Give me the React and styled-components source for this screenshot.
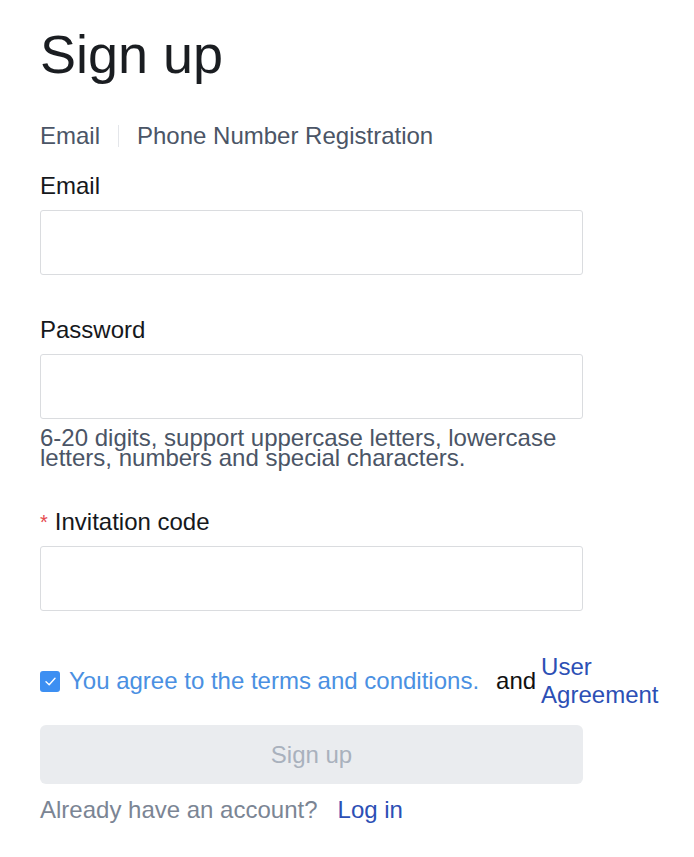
import React from 'react'
import styled, { createGlobalStyle } from 'styled-components';

const GlobalStyle = createGlobalStyle`
    body {
        margin: 0;
        background: #ffffff;
        font-family: "Liberation Sans", Arial, sans-serif;
    }
`;

const Page = styled.div`
    width: 620px;
    padding: 23px 34px 40px 40px;
`;
const Title = styled.h1`
    margin: 0;
    font-size: 54px;
    font-weight: 400;
    line-height: 62px;
    color: #1a1d21;
`;
const Tabs = styled.div`
    display: flex;
    align-items: center;
    margin-top: 35px;
    height: 32px;
`;
const Tab = styled.span`
    font-size: 24px;
    line-height: 32px;
    color: #4b5566;
    padding: 0 18px;
    &:first-child {
        padding-left: 0;
    }
`;
const Divider = styled.span`
    width: 1px;
    height: 22px;
    background: #e4e6ea;
`;
const Field = styled.div`
    margin-top: ${props => props.gap}px;
`;
const Label = styled.label`
    display: block;
    font-size: 24px;
    line-height: 32px;
    color: #16181c;
`;
const Star = styled.span`
    color: #e5484d;
    font-size: 20px;
    margin-right: 7px;
    vertical-align: top;
`;
const Input = styled.input`
    display: block;
    box-sizing: border-box;
    width: 543px;
    height: 65px;
    margin-top: 8px;
    border: 1px solid #dadcdf;
    border-radius: 3px;
    padding: 0 14px;
    font-size: 22px;
    font-family: inherit;
    outline: none;
`;
const Hint = styled.p`
    margin: 9px 0 0;
    width: 543px;
    font-size: 24px;
    line-height: 20px;
    color: #4b5566;
`;
const AgreeRow = styled.div`
    display: flex;
    align-items: center;
    margin-top: 42px;
    font-size: 24px;
`;
const CheckLabel = styled.label`
    display: flex;
    align-items: center;
    flex-shrink: 0;
    color: #4a90e2;
    line-height: 28px;
`;
const Box = styled.span`
    display: inline-flex;
    align-items: center;
    justify-content: center;
    width: 20px;
    height: 21px;
    border-radius: 3px;
    background: #3d8ff2;
    margin-right: 9px;
`;
const And = styled.span`
    flex-shrink: 0;
    margin: 0 5px 0 17px;
    color: #111111;
    line-height: 28px;
`;
const Link = styled.a`
    color: #2c4fb5;
    line-height: 28px;
    text-decoration: none;
    cursor: pointer;
`;
const Submit = styled.button`
    display: block;
    width: 543px;
    height: 59px;
    margin-top: 16px;
    border: none;
    border-radius: 6px;
    background: #eaecef;
    color: #a9b1bd;
    font-size: 24px;
    font-family: inherit;
`;
const Footer = styled.div`
    margin-top: 10px;
    font-size: 24px;
    line-height: 32px;
    color: #7b8594;
`;
const LoginLink = styled(Link)`
    margin-left: 20px;
    line-height: 32px;
`;

function Check() {
    return (
        <svg width="13" height="13" viewBox="0 0 13 13">
            <path d="M2 6.8 L5.2 9.8 L11 3.2" fill="none" stroke="#ffffff" strokeWidth="1.4" strokeLinecap="round" strokeLinejoin="round" />
        </svg>
    );
}

export default function App() {
    return (
        <Page>
            <GlobalStyle />
            <Title>Sign up</Title>
            <Tabs>
                <Tab>Email</Tab>
                <Divider />
                <Tab>Phone Number Registration</Tab>
            </Tabs>

            <Field gap={18}>
                <Label>Email</Label>
                <Input type="text" />
            </Field>

            <Field gap={39}>
                <Label>Password</Label>
                <Input type="password" />
                <Hint>6-20 digits, support uppercase letters, lowercase letters, numbers and special characters.</Hint>
            </Field>

            <Field gap={38}>
                <Label><Star>*</Star>Invitation code</Label>
                <Input type="text" />
            </Field>

            <AgreeRow>
                <CheckLabel><Box><Check /></Box>You agree to the terms and conditions.</CheckLabel>
                <And>and</And>
                <Link>User Agreement</Link>
            </AgreeRow>

            <Submit disabled>Sign up</Submit>
            <Footer>
                Already have an account?<LoginLink>Log in</LoginLink>
            </Footer>
        </Page>
    );
}
